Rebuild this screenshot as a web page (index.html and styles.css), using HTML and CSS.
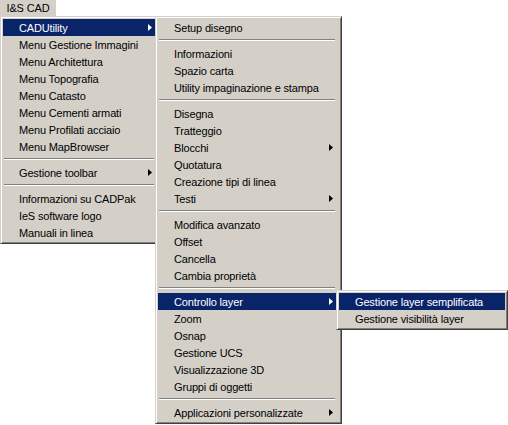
FILE: index.html
```html
<!DOCTYPE html>
<html lang="it">
<head>
    <meta charset="UTF-8">
    <title>I&amp;S CAD</title>
    <link rel="stylesheet" href="styles.css">
</head>
<body>
    <div class="menubar">
        <div class="menubar-item">I&amp;S CAD</div>
    </div>

    <!-- menu principale -->
    <ul class="menu menu-main">
        <li class="item sub active">CADUtility
            <ul class="menu menu-cad">
                <li class="item">Setup disegno</li>
                <li class="sep"></li>
                <li class="item">Informazioni</li>
                <li class="item">Spazio carta</li>
                <li class="item">Utility impaginazione e stampa</li>
                <li class="sep"></li>
                <li class="item">Disegna</li>
                <li class="item">Tratteggio</li>
                <li class="item sub">Blocchi</li>
                <li class="item">Quotatura</li>
                <li class="item">Creazione tipi di linea</li>
                <li class="item sub">Testi</li>
                <li class="sep"></li>
                <li class="item">Modifica avanzato</li>
                <li class="item">Offset</li>
                <li class="item">Cancella</li>
                <li class="item">Cambia proprietà</li>
                <li class="sep"></li>
                <li class="item sub active">Controllo layer
                    <ul class="menu menu-layer">
                        <li class="item active">Gestione layer semplificata</li>
                        <li class="item">Gestione visibilità layer</li>
                    </ul>
                </li>
                <li class="item">Zoom</li>
                <li class="item">Osnap</li>
                <li class="item">Gestione UCS</li>
                <li class="item">Visualizzazione 3D</li>
                <li class="item">Gruppi di oggetti</li>
                <li class="sep"></li>
                <li class="item sub">Applicazioni personalizzate</li>
            </ul>
        </li>
        <li class="item">Menu Gestione Immagini</li>
        <li class="item">Menu Architettura</li>
        <li class="item">Menu Topografia</li>
        <li class="item">Menu Catasto</li>
        <li class="item">Menu Cementi armati</li>
        <li class="item">Menu Profilati acciaio</li>
        <li class="item">Menu MapBrowser</li>
        <li class="sep"></li>
        <li class="item sub">Gestione toolbar</li>
        <li class="sep"></li>
        <li class="item">Informazioni su CADPak</li>
        <li class="item">IeS software logo</li>
        <li class="item">Manuali in linea</li>
    </ul>
</body>
</html>
```

FILE: styles.css
```css
body {
    margin: 0;
    padding: 0;
    background-color: #ffffff;
    font-family: "Liberation Sans", Arial, sans-serif;
    font-size: 11px;
    letter-spacing: -0.15px;
    color: #000000;
    width: 508px;
    height: 425px;
    overflow: hidden;
    position: relative;
}

.menubar {
    height: 16px;
    display: flex;
}

.menubar-item {
    width: 56px;
    height: 16px;
    line-height: 16px;
    text-align: center;
    background-color: #d4d0c8;
}

.menu {
    list-style: none;
    margin: 0;
    padding: 2px;
    background-color: #d4d0c8;
    border: 1px solid;
    border-color: #d4d0c8 #404040 #404040 #d4d0c8;
    box-shadow: inset 1px 1px 0 #ffffff, inset -1px -1px 0 #808080;
    position: absolute;
}

.menu-main {
    left: 0;
    top: 16px;
    width: 152px;
}

.menu-cad {
    left: 152px;
    top: -3px;
    width: 178px;
    padding-right: 5px;
}

.menu-layer {
    left: 178px;
    top: -3px;
    width: 166px;
}

.item {
    position: relative;
    height: 17px;
    line-height: 18px;
    padding-left: 16px;
    white-space: nowrap;
    color: #000000;
}

.item.active {
    background-color: #0a246a;
    color: #ffffff;
}

.item .item {
    color: #000000;
}

.item .item.active {
    color: #ffffff;
}

.sub::after {
    content: "";
    position: absolute;
    right: 3px;
    top: 5px;
    width: 4px;
    height: 7px;
    background-color: #000000;
    clip-path: polygon(0 0, 100% 50%, 0 100%);
}

.sub.active::after {
    background-color: #ffffff;
}

.sep {
    height: 9px;
    position: relative;
}

.sep::before {
    content: "";
    position: absolute;
    left: 1px;
    right: 1px;
    top: 3px;
    height: 1px;
    background-color: #808080;
    border-bottom: 1px solid #ffffff;
}
```
